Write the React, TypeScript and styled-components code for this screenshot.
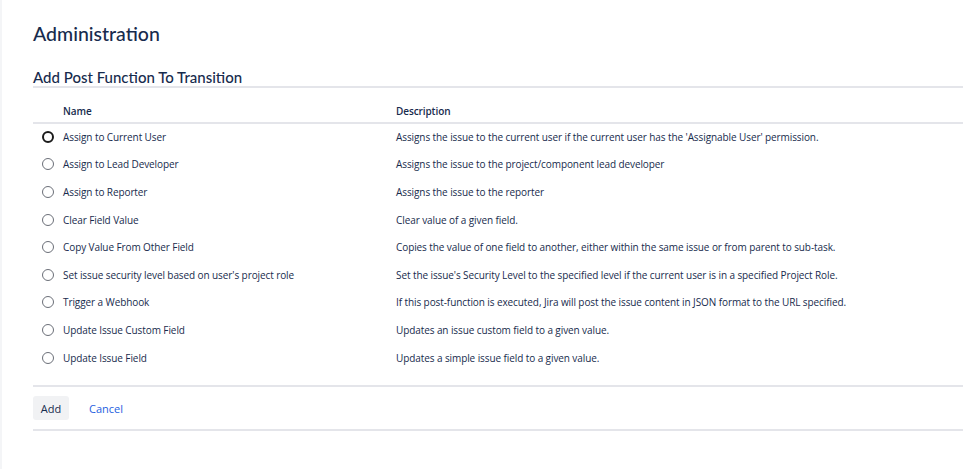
import React from "react";
import styled, { createGlobalStyle } from "styled-components";

const Global = createGlobalStyle`
  html, body { margin: 0; padding: 0; background: #fff; }
  body { font-family: "Open Sans", "Noto Sans", sans-serif; color: #172B4D; }
`;

const Shell = styled.div`
  display: flex;
  min-height: 469px;
`;

const SideStrip = styled.div`
  width: 2px;
  flex: none;
  background: #F4F5F7;
`;

const Main = styled.main`
  flex: 1;
  padding: 22px 0 0 31px;
`;

const PageTitle = styled.h1`
  margin: 0;
  font-family: Lato, "Open Sans", sans-serif;
  font-size: 19.5px;
  font-weight: 500;
  line-height: 24px;
  color: #172B4D;
`;

const SectionTitle = styled.h2`
  margin: 22px 0 0;
  font-family: Lato, "Open Sans", sans-serif;
  font-size: 15px;
  font-weight: 500;
  line-height: 18px;
  padding-bottom: 0;
  border-bottom: 2px solid #E4E5EA;
  color: #172B4D;
`;

const Table = styled.table`
  width: 100%;
  border-collapse: collapse;
  table-layout: fixed;
  margin-top: 14px;
  font-size: 10px;
  letter-spacing: -0.09px;
`;

const HeadCell = styled.th<{ $w?: number }>`
  text-align: left;
  font-weight: 600;
  height: 19px;
  padding: 1px 0 0;
  vertical-align: top;
  line-height: 16px;
  border-bottom: 2px solid #E4E5EA;
  width: ${(p) => (p.$w ? `${p.$w}px` : "auto")};
`;

const Row = styled.tr`
  height: 27.6px;
`;

const Cell = styled.td`
  padding: 0;
  line-height: 16px;
  vertical-align: middle;
  white-space: nowrap;
`;

const RadioBox = styled.span<{ $focus?: boolean }>`
  display: block;
  box-sizing: border-box;
  margin-left: 9px;
  width: 12px;
  height: 12px;
  border-radius: 50%;
  border: ${(p) => (p.$focus ? "2.5px solid #1b1b1b" : "1px solid #6B6F78")};
  background: #fff;
`;

const Footer = styled.div`
  margin-top: 14px;
  display: flex;
  align-items: center;
  gap: 20px;
  padding: 9px 0;
  border-top: 2px solid #E4E5EA;
  border-bottom: 2px solid #E4E5EA;
`;

const Button = styled.button`
  height: 24px;
  width: 36px;
  border: none;
  border-radius: 3px;
  background: #F1F2F4;
  font-family: inherit;
  font-size: 11px;
  color: #172B4D;
  padding: 0;
`;

const LinkButton = styled.a`
  font-size: 11px;
  color: #2560E0;
  text-decoration: none;
`;

const rows = [
  ["Assign to Current User", "Assigns the issue to the current user if the current user has the 'Assignable User' permission."],
  ["Assign to Lead Developer", "Assigns the issue to the project/component lead developer"],
  ["Assign to Reporter", "Assigns the issue to the reporter"],
  ["Clear Field Value", "Clear value of a given field."],
  ["Copy Value From Other Field", "Copies the value of one field to another, either within the same issue or from parent to sub-task."],
  ["Set issue security level based on user's project role", "Set the issue's Security Level to the specified level if the current user is in a specified Project Role."],
  ["Trigger a Webhook", "If this post-function is executed, Jira will post the issue content in JSON format to the URL specified."],
  ["Update Issue Custom Field", "Updates an issue custom field to a given value."],
  ["Update Issue Field", "Updates a simple issue field to a given value."],
];

export default function App() {
  return (
    <>
      <Global />
      <Shell>
        <SideStrip />
        <Main>
          <PageTitle>Administration</PageTitle>
          <SectionTitle>Add Post Function To Transition</SectionTitle>
          <Table>
            <thead>
              <tr>
                <HeadCell $w={30} />
                <HeadCell $w={333}>Name</HeadCell>
                <HeadCell>Description</HeadCell>
              </tr>
            </thead>
            <tbody>
              {rows.map(([name, desc], i) => (
                <Row key={name}>
                  <Cell><RadioBox $focus={i === 0} /></Cell>
                  <Cell>{name}</Cell>
                  <Cell>{desc}</Cell>
                </Row>
              ))}
            </tbody>
          </Table>
          <Footer>
            <Button>Add</Button>
            <LinkButton href="#">Cancel</LinkButton>
          </Footer>
        </Main>
      </Shell>
    </>
  );
}
